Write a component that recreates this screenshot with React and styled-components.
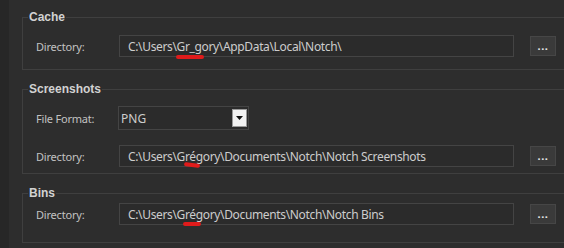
import React from 'react';
import styled, { createGlobalStyle } from 'styled-components';

const GlobalStyle = createGlobalStyle`
    html, body {
        margin: 0;
        padding: 0;
        background: #2d2d2d;
        overflow: hidden;
    }
    body {
        font-family: "Noto Sans", "Open Sans", sans-serif;
        color: #c8c8c8;
    }
`;

const Page = styled.div`
    display: flex;
    width: 580px;
    height: 248px;
    background: #2d2d2d;
`;

const Strip = styled.div`
    width: 9px;
    flex-shrink: 0;
    background: #272727;
`;

const Main = styled.div`
    flex: 1;
    padding: 9px 0 0 13px;
    display: flex;
    flex-direction: column;
    gap: 11px;
`;

const Group = styled.fieldset`
    margin: 0;
    border: 1px solid #3f3f3f;
    padding: ${p => p.$top}px 0 ${p => p.$bottom}px 13px;
    display: flex;
    flex-direction: column;
    gap: ${p => p.$gap || 0}px;
    min-width: 0;
`;

const Title = styled.legend`
    font-family: "Liberation Sans", Arial, sans-serif;
    font-size: 12px;
    font-weight: 700;
    line-height: 16px;
    color: #d2d2d2;
    padding: 0 1px;
    margin-left: -8px;
`;

const Row = styled.div`
    display: grid;
    grid-template-columns: 83px 395px 16px 26px;
    align-items: center;
`;

const Label = styled.span`
    font-size: 11px;
    letter-spacing: -0.2px;
    color: #c2c2c2;
`;

const Field = styled.div`
    position: relative;
    height: 22px;
    box-sizing: border-box;
    border: 1px solid #444;
    background: #2b2b2b;
    padding-left: 8px;
    display: flex;
    align-items: center;
    font-size: 12px;
    letter-spacing: -0.35px;
    color: #cdcdcd;
    white-space: nowrap;
`;

const Browse = styled.button`
    grid-column: 4;
    width: 26px;
    height: 20px;
    padding: 0;
    border: 1px solid #464646;
    background: #3a3a3a;
    color: #e8e8e8;
    font-size: 11px;
    font-weight: 700;
    font-family: inherit;
    line-height: 14px;
    letter-spacing: 0.5px;
`;

const Select = styled.div`
    display: flex;
    align-items: center;
    justify-content: space-between;
    width: 131px;
    height: 24px;
    box-sizing: border-box;
    border: 1px solid #444;
    background: #2b2b2b;
    padding: 0 1px 0 2px;
    font-size: 12px;
    color: #cdcdcd;
    margin-left: -1px;
`;

const ArrowBox = styled.div`
    width: 15px;
    height: 18px;
    box-sizing: border-box;
    background: #f2f2f2;
    border: 1px solid #9a9a9a;
    display: flex;
    align-items: center;
    justify-content: center;
`;

const Mark = styled.span`
    position: absolute;
    height: 4px;
    border-radius: 2px;
    background: #e01b1b;
`;

const DirRow = ({ path, mark }) => (
    <Row>
        <Label>Directory:</Label>
        <Field>
            {path}
            {mark && <Mark style={mark} />}
        </Field>
        <span />
        <Browse>...</Browse>
    </Row>
);

const App = () => {
    return (
        <Page>
            <GlobalStyle />
            <Strip />
            <Main>
                <Group $top={10} $bottom={12}>
                    <Title>Cache</Title>
                    <DirRow
                        path="C:\Users\Gr_gory\AppData\Local\Notch\"
                        mark={{ left: 56, top: 19, width: 28 }}
                    />
                </Group>
                <Group $top={9} $bottom={6} $gap={15}>
                    <Title>Screenshots</Title>
                    <Row>
                        <Label>File Format:</Label>
                        <Select>
                            PNG
                            <ArrowBox>
                                <svg width="7" height="4" viewBox="0 0 7 4">
                                    <path d="M0 0 H7 L3.5 4 Z" fill="#111" />
                                </svg>
                            </ArrowBox>
                        </Select>
                    </Row>
                    <DirRow
                        path="C:\Users\Grégory\Documents\Notch\Notch Screenshots"
                        mark={{ left: 64, top: 17, width: 16, transform: 'rotate(8deg)' }}
                    />
                </Group>
                <Group $top={2} $bottom={17}>
                    <Title>Bins</Title>
                    <DirRow
                        path="C:\Users\Grégory\Documents\Notch\Notch Bins"
                        mark={{ left: 63, top: 18, width: 18 }}
                    />
                </Group>
            </Main>
        </Page>
    );
};

export default App;
